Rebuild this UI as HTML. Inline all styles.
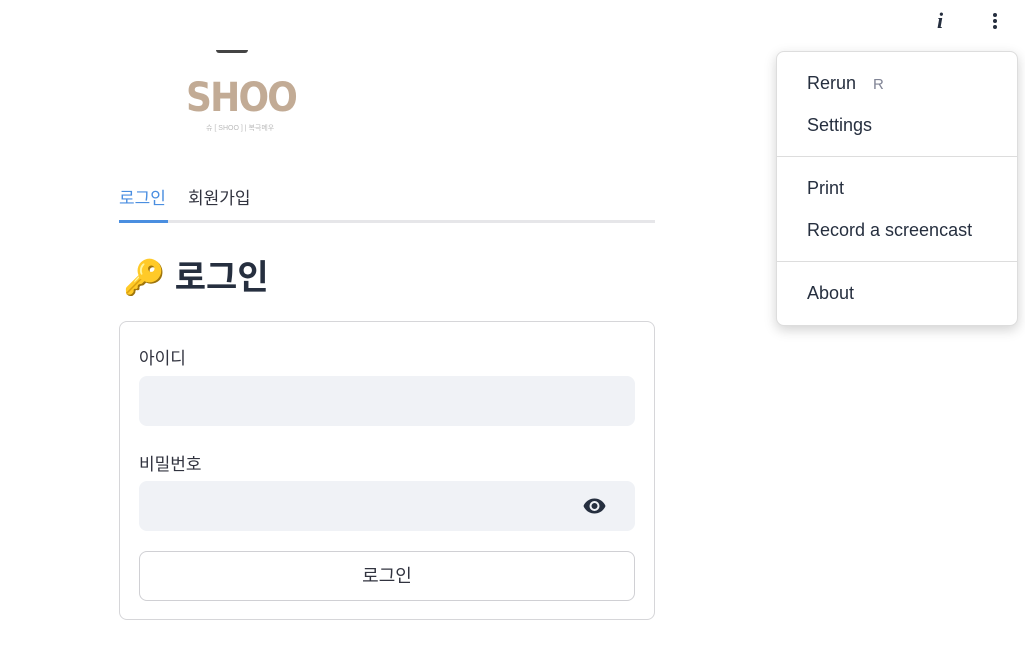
<!DOCTYPE html>
<html><head><meta charset="utf-8"><style>
body{margin:0;width:1025px;height:661px;background:#fff;font-family:"Liberation Sans","Noto Sans CJK KR",sans-serif;color:#31333f;position:relative;overflow:hidden}
.a{position:absolute}
</style></head><body>
<div class="a" style="left:216px;top:50px;width:32px;height:3px;border-radius:0 0 16px 16px;background:#444"></div>
<div class="a" style="left:186px;top:73px;font-size:40px;font-weight:900;color:#c2ab95;letter-spacing:-2px;font-family:'DejaVu Sans',sans-serif;line-height:50px;transform:scaleX(0.9);transform-origin:left">SHOO</div>
<div class="a" style="left:206px;top:123px;font-size:7px;color:#bbb">슈 [ SHOO ] | 복극메우</div>
<div class="a" style="left:119px;top:184px;font-size:17px;color:#4a8ee0">로그인</div>
<div class="a" style="left:188px;top:184px;font-size:17px">회원가입</div>
<div class="a" style="left:119px;top:220px;width:536px;height:3px;background:#e6e6e9"></div>
<div class="a" style="left:119px;top:220px;width:49px;height:3px;background:#4a8ee0"></div>
<div class="a" style="left:123px;top:258px;font-size:34px;font-weight:bold;color:#262f3f;line-height:40px">🔑 로그인</div>
<div class="a" style="left:119px;top:321px;width:534px;height:297px;border:1px solid #d6d6d9;border-radius:8px"></div>
<div class="a" style="left:139px;top:344px;font-size:17px">아이디</div>
<div class="a" style="left:139px;top:376px;width:496px;height:50px;background:#f0f2f6;border-radius:8px"></div>
<div class="a" style="left:139px;top:450px;font-size:17px">비밀번호</div>
<div class="a" style="left:139px;top:481px;width:496px;height:50px;background:#f0f2f6;border-radius:8px"></div>
<svg class="a" style="left:582px;top:494px" width="25" height="24" viewBox="0 0 24 24"><path fill="#262f3f" d="M12 4.5C7 4.5 2.7 7.6 1 12c1.7 4.4 6 7.5 11 7.5s9.3-3.1 11-7.5c-1.7-4.4-6-7.5-11-7.5zM12 17a5 5 0 110-10 5 5 0 010 10zm0-8a3 3 0 100 6 3 3 0 000-6z"/></svg>
<div class="a" style="left:139px;top:551px;width:494px;height:48px;border:1px solid #d0d0d4;border-radius:8px;text-align:center;line-height:48px;font-size:18px">로그인</div>
<div class="a" style="left:937px;top:8px;font-size:22px;font-weight:bold;font-style:italic;color:#262f3f;font-family:'Liberation Serif',serif">i</div>
<div class="a" style="left:993px;top:13px;width:4px;height:4px;border-radius:2px;background:#262f3f;box-shadow:0 6px 0 #262f3f,0 12px 0 #262f3f"></div>
<div class="a" style="left:776px;top:51px;width:240px;height:273px;background:#fff;border:1px solid #ddd;border-radius:8px;box-shadow:0 4px 12px rgba(0,0,0,.18);font-size:18px;color:#262f3f">
<div class="a" style="left:30px;top:21px">Rerun <span style="color:#808495;font-size:15px;margin-left:12px">R</span></div>
<div class="a" style="left:30px;top:63px">Settings</div>
<div class="a" style="left:0;top:104px;width:240px;height:1px;background:#ddd"></div>
<div class="a" style="left:30px;top:126px">Print</div>
<div class="a" style="left:30px;top:168px">Record a screencast</div>
<div class="a" style="left:0;top:209px;width:240px;height:1px;background:#ddd"></div>
<div class="a" style="left:30px;top:231px">About</div>
</div>
</body></html>
